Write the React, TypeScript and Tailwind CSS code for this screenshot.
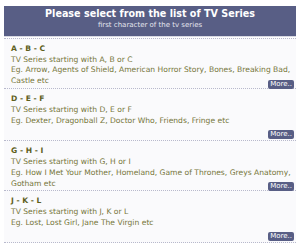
import React from "react";

type Sec = { title: string; line1: string; lines: string[]; last: string };

const sections: Sec[] = [
  {
    title: "A - B - C",
    line1: "TV Series starting with A, B or C",
    lines: ["Eg. Arrow, Agents of Shield, American Horror Story, Bones, Breaking Bad,"],
    last: "Castle etc",
  },
  {
    title: "D - E - F",
    line1: "TV Series starting with D, E or F",
    lines: ["Eg. Dexter, Dragonball Z, Doctor Who, Friends, Fringe etc"],
    last: "",
  },
  {
    title: "G - H - I",
    line1: "TV Series starting with G, H or I",
    lines: ["Eg. How I Met Your Mother, Homeland, Game of Thrones, Greys Anatomy,"],
    last: "Gotham etc",
  },
  {
    title: "J - K - L",
    line1: "TV Series starting with J, K or L",
    lines: ["Eg. Lost, Lost Girl, Jane The Virgin etc"],
    last: "",
  },
];

export default function App() {
  return (
    <div
      className="w-[300px] h-[247px] bg-white overflow-hidden pt-[6px] px-[4px]"
      style={{ fontFamily: "Verdana, 'DejaVu Sans', sans-serif" }}
    >
      <div className="bg-[#585e85] h-[31px] flex flex-col items-center pt-[1px] text-white border-b border-[#d8d9e3]">
        <div className="text-[9.6px] font-bold leading-[13px]">Please select from the list of TV Series</div>
        <div className="text-[7px] leading-[11px] text-[#e4e5ee]">first character of the tv series</div>
      </div>
      <div className="bg-[#fafafc] border-t border-dotted border-[#b8b9cc] mt-[1px]">
        {sections.map((s) => (
          <div
            key={s.title}
            className="px-[7px] pt-[5px] pb-[1px] border-b border-dotted border-[#b8b9cc] text-[7.6px] leading-[10.7px] text-[#76763a]"
          >
            <div className="font-bold text-[#5f5f1c]">{s.title}</div>
            <div>{s.line1}</div>
            {s.lines.map((l) => (
              <div key={l} className="whitespace-nowrap">{l}</div>
            ))}
            <div className="flex justify-between items-end h-[11px]">
              <span>{s.last}</span>
              <span className="bg-[#585e85] text-white text-[7px] leading-[9px] px-[2px] rounded-[2px] mb-[-2px] mr-[-5px]">
                More..
              </span>
            </div>
            {s.last === "" ? <div className="h-[2px]" /> : null}
          </div>
        ))}
      </div>
    </div>
  );
}
